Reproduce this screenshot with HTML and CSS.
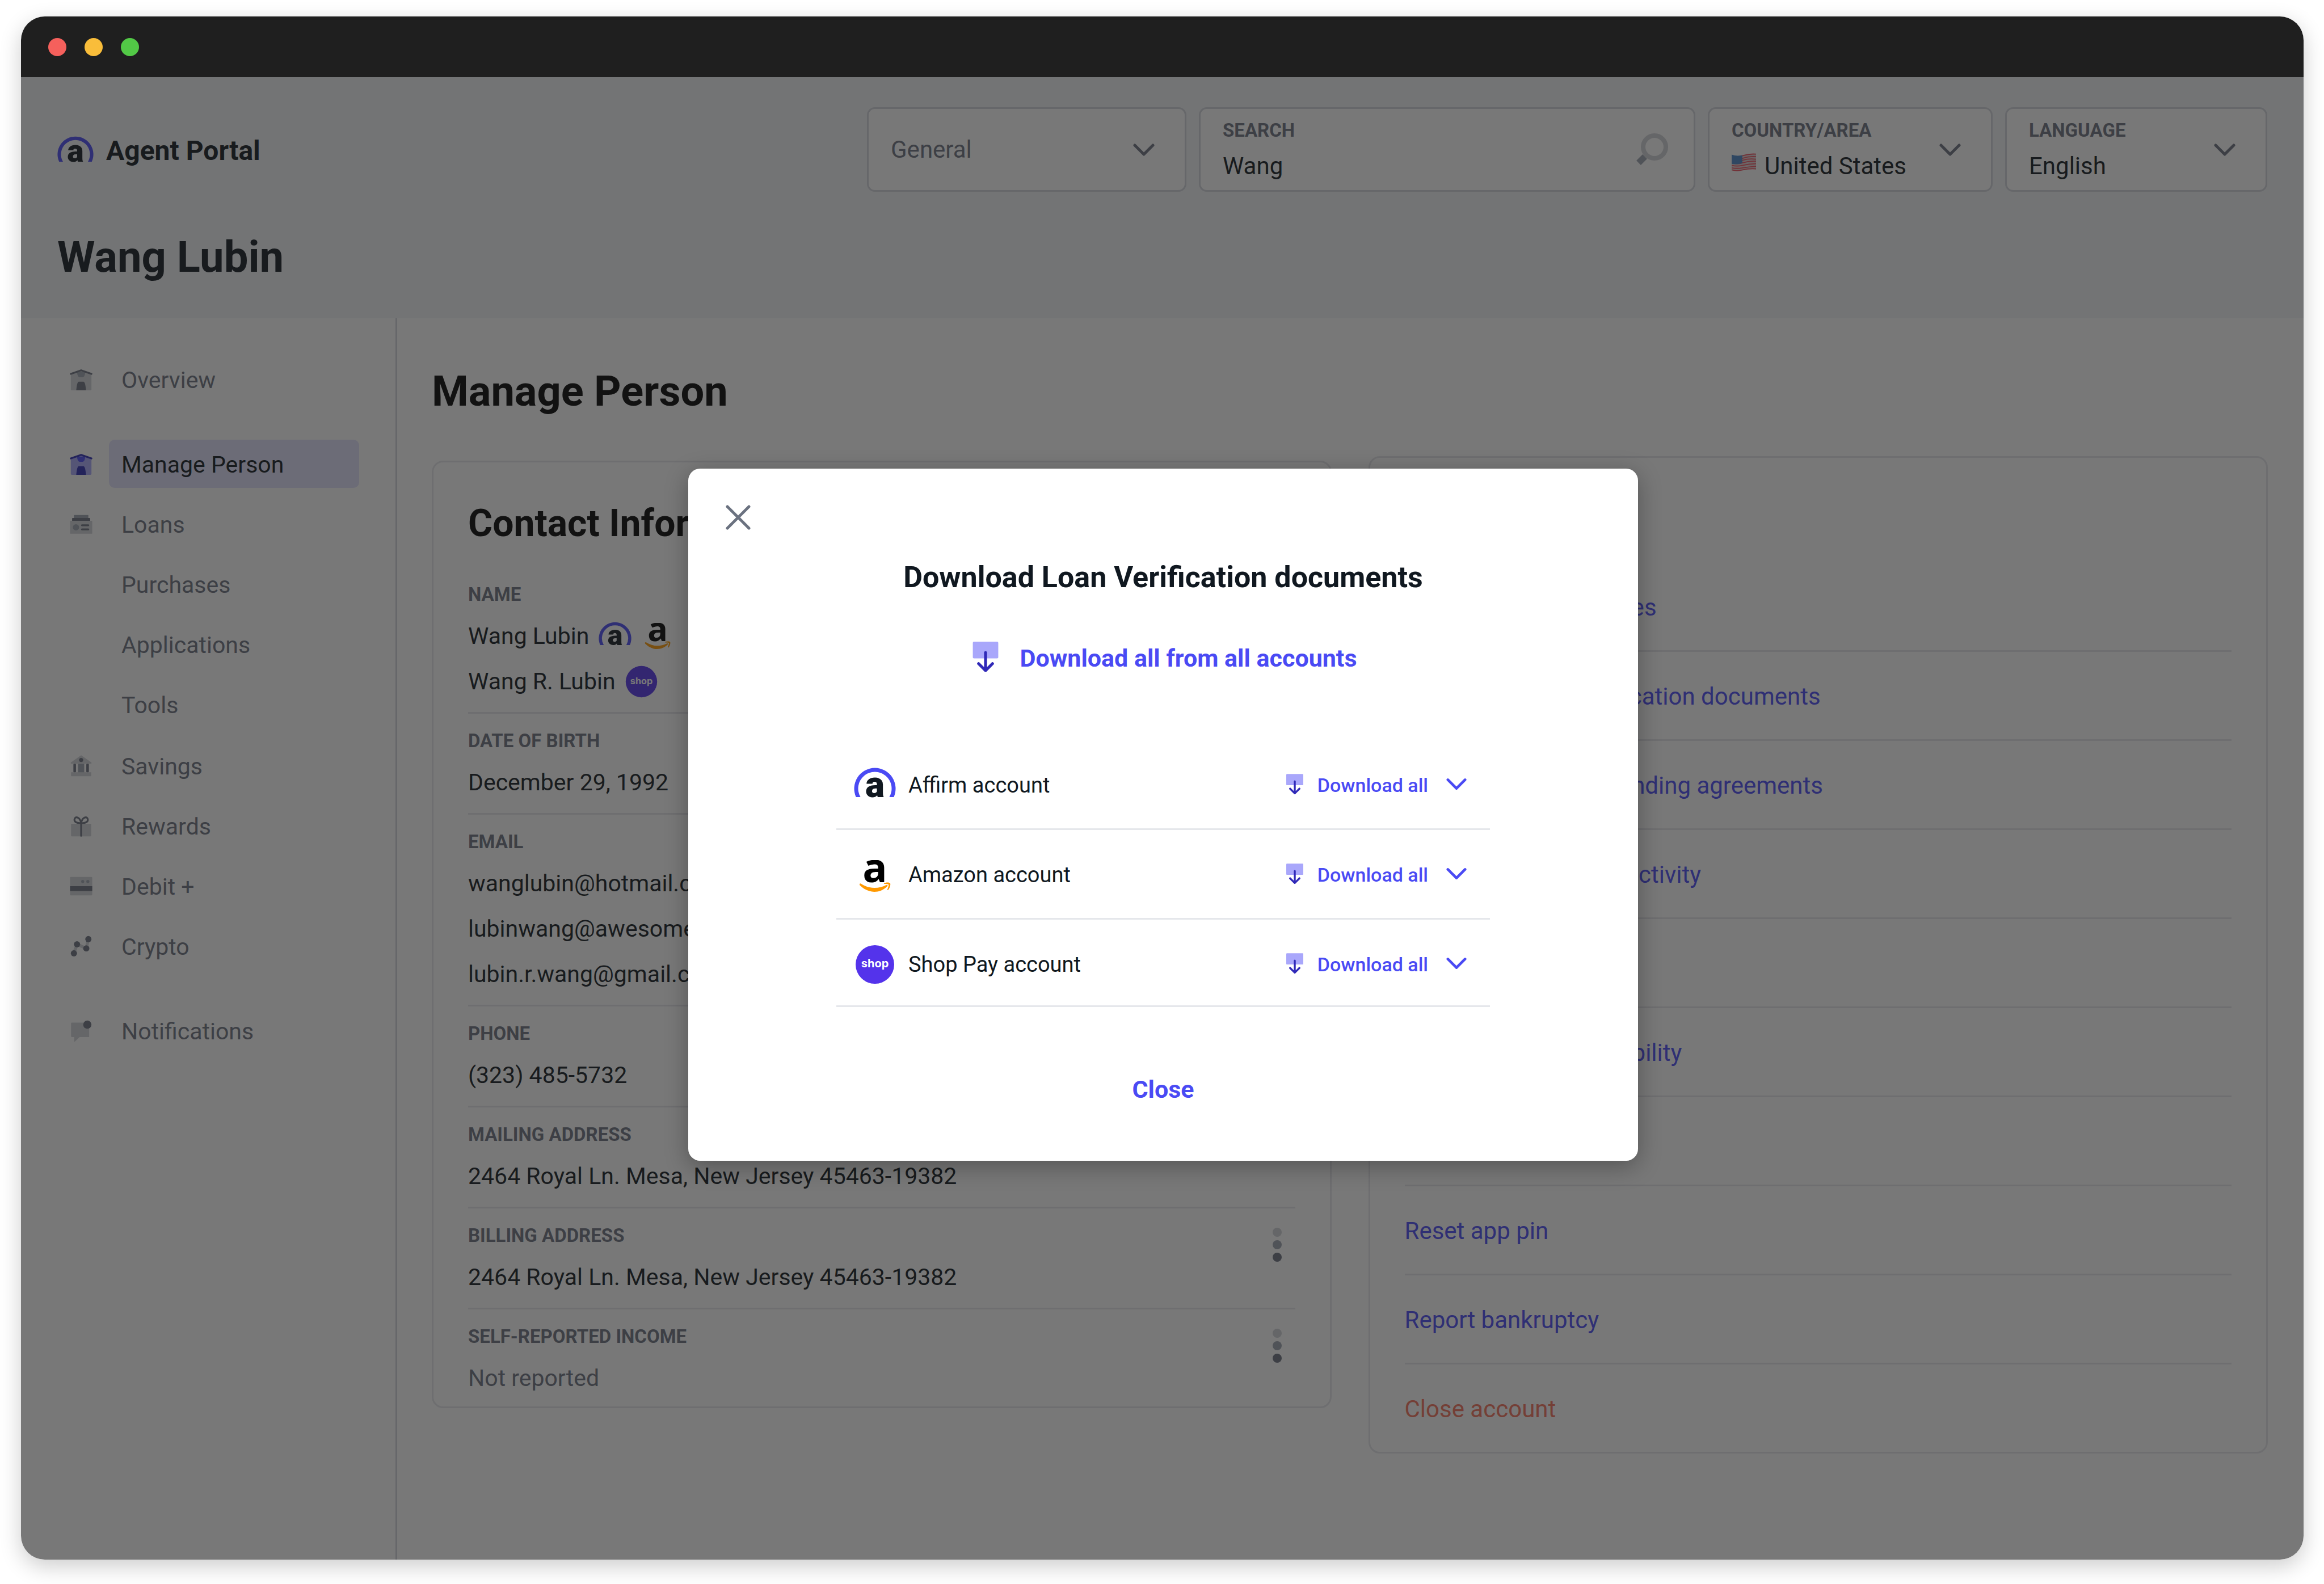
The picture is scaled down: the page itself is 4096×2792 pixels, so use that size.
FILE: index.html
```html
<!DOCTYPE html>
<html lang="en">
<head>
<meta charset="utf-8">
<meta name="viewport" content="width=device-width, initial-scale=1">
<title>Agent Portal – Wang Lubin</title>
<link rel="stylesheet" href="styles.css">
</head>
<body>

<!-- Shared icon and logo symbols -->
<svg class="sprite" aria-hidden="true">
  <symbol id="logo-affirm" viewBox="0 0 74 54">
    <path class="affirm-arc" d="M3.7 52A36.5 36.5 0 1 1 70.3 52H62.4A29.5 29.5 0 1 0 11.6 52Z"/>
    <text class="affirm-a" x="37" y="52" text-anchor="middle">a</text>
  </symbol>
  <symbol id="logo-amazon" viewBox="0 0 56 56">
    <text class="amazon-a" x="28" y="39" text-anchor="middle">a</text>
    <path class="amazon-smile" d="M1 42C2 41 3 41 4 42C18 51 34 51 48 44C50 43 51 45 50 46C43 53 35 56 27 56C17 56 8 51 1 44Z"/>
    <path class="amazon-smile" d="M44 41C47 39 54 39 55 41C56 44 54 50 51 53C50 53 50 53 50 52C51 49 53 44 52 43C51 42 47 42 44 42Z"/>
  </symbol>
  <symbol id="logo-shop" viewBox="0 0 70 70">
    <circle class="shop-disc" cx="35" cy="35" r="34"/>
    <text class="shop-word" x="35" y="40" text-anchor="middle">shop</text>
  </symbol>
  <symbol id="icon-chevron" viewBox="0 0 38 22">
    <path class="line" d="M3 3L19 19L35 3"/>
  </symbol>
  <symbol id="icon-download" viewBox="0 0 44 52">
    <rect class="tone-light" width="44" height="29" rx="2"/>
    <path class="tone-arrow" d="M22 19V49M10 38L22 50L34 38"/>
  </symbol>
  <symbol id="icon-close" viewBox="0 0 44 44">
    <path class="line" d="M3 3L41 41M41 3L3 41"/>
  </symbol>
  <symbol id="icon-search" viewBox="0 0 58 58">
    <circle class="ring" cx="34" cy="24" r="20"/>
    <path class="handle" d="M17 41L6 52"/>
  </symbol>
  <symbol id="icon-more" viewBox="0 0 16 60">
    <circle class="tone-light" cx="8" cy="8" r="8"/>
    <circle class="tone-mid" cx="8" cy="30" r="8"/>
    <circle class="tone-dark" cx="8" cy="52" r="8"/>
  </symbol>
  <symbol id="icon-home" viewBox="0 0 88 88">
    <path class="tone-light" d="M4 22L44 8L84 22V82Q84 86 80 86H8Q4 86 4 82Z"/>
    <path class="tone-mid" d="M28 15H60Q58 35 50 35H38Q30 35 28 15Z"/>
    <path class="tone-dark" d="M25 86Q28 52 35 52H53Q60 52 63 86Z"/>
    <path class="tone-stroke" d="M4 22L44 8L84 22"/>
  </symbol>
  <symbol id="icon-loans" viewBox="0 0 88 88">
    <rect class="tone-mid" x="16" y="8" width="56" height="14" rx="2"/>
    <rect class="tone-dark" x="9" y="20" width="70" height="12" rx="2"/>
    <rect class="tone-light" x="1" y="31" width="86" height="50" rx="2"/>
    <circle class="tone-mid" cx="24" cy="56" r="12"/>
    <path class="tone-stroke" d="M47 48H72M47 64H72"/>
  </symbol>
  <symbol id="icon-savings" viewBox="0 0 88 88">
    <path class="tone-light" d="M44 3L84 31V35H4V31Z"/>
    <path class="tone-light" d="M5 69H83V82Q83 84 81 84H7Q5 84 5 82Z"/>
    <rect class="tone-mid" x="32" y="36" width="24" height="33"/>
    <rect class="tone-dark" x="14" y="36" width="10" height="33" rx="3"/>
    <rect class="tone-dark" x="64" y="36" width="10" height="33" rx="3"/>
    <circle class="tone-dark" cx="44" cy="21" r="8"/>
  </symbol>
  <symbol id="icon-rewards" viewBox="0 0 88 88">
    <rect class="tone-light" x="5" y="35" width="78" height="49" rx="3"/>
    <path class="tone-stroke" d="M44 82V32C28 34 18 28 18 20C18 12 24 8 30 11C38 14 42 22 44 32C46 22 50 14 58 11C64 8 70 12 70 20C70 28 60 34 44 32"/>
  </symbol>
  <symbol id="icon-debit" viewBox="0 0 88 88">
    <rect class="tone-light" x="1" y="8" width="86" height="72" rx="3"/>
    <rect class="tone-dark" x="1" y="44" width="86" height="19"/>
    <circle class="tone-mid" cx="50" cy="26" r="6"/>
    <circle class="tone-mid" cx="70" cy="26" r="6"/>
  </symbol>
  <symbol id="icon-crypto" viewBox="0 0 88 88">
    <path class="tone-link" d="M16 71L28 36L64 52L72 16"/>
    <circle class="tone-dark" cx="16" cy="71" r="12"/>
    <circle class="tone-dark" cx="28" cy="36" r="12"/>
    <circle class="tone-dark" cx="64" cy="52" r="12"/>
    <circle class="tone-dark" cx="72" cy="16" r="12"/>
  </symbol>
  <symbol id="icon-notifications" viewBox="0 0 88 88">
    <path class="tone-light" d="M8 12H72Q75 12 75 15V68H38L20 85Q17 87 17 83V68H8Q5 68 5 65V15Q5 12 8 12Z"/>
    <circle class="tone-dark" cx="68" cy="20" r="16"/>
  </symbol>
  <symbol id="flag-us" viewBox="0 0 48 34">
    <path class="flag-white" d="M0 3Q10 7 22 4T48 1V31Q38 28 26 31T0 33Z"/>
    <path class="flag-red" d="M0 4Q10 8 22 4T48 1M0 9Q10 13 22 9T48 6M0 13Q10 17 22 13T48 11M0 18Q10 22 22 18T48 15M0 23Q10 26 22 23T48 20M0 28Q10 30 22 28T48 25M0 32Q10 35 22 32T48 30"/>
    <path class="flag-blue" d="M0 2Q10 6 21 3V19Q10 22 0 20Z"/>
  </symbol>
</svg>

<div class="window">
  <div class="titlebar">
    <span class="dot dot-red"></span>
    <span class="dot dot-yellow"></span>
    <span class="dot dot-green"></span>
  </div>

  <div class="app">
    <header class="header">
      <div class="topbar">
        <a class="brand" href="#">
          <svg class="brand-logo" aria-hidden="true"><use href="#logo-affirm"/></svg>
          <span class="brand-name">Agent Portal</span>
        </a>
        <div class="fields">
          <div class="field field-scope">
            <select class="control control-muted" aria-label="Search scope"><option>General</option></select>
            <svg class="chevron" aria-hidden="true"><use href="#icon-chevron"/></svg>
          </div>
          <div class="field field-search">
            <div class="field-main">
              <label class="caption" for="search">SEARCH</label>
              <input class="control" id="search" type="text" value="Wang">
            </div>
            <svg class="search-icon" aria-hidden="true"><use href="#icon-search"/></svg>
          </div>
          <div class="field field-country">
            <div class="field-main">
              <label class="caption" for="country">COUNTRY/AREA</label>
              <div class="country-value">
                <svg class="flag" aria-hidden="true"><use href="#flag-us"/></svg>
                <select class="control" id="country"><option>United States</option></select>
              </div>
            </div>
            <svg class="chevron" aria-hidden="true"><use href="#icon-chevron"/></svg>
          </div>
          <div class="field field-language">
            <div class="field-main">
              <label class="caption" for="language">LANGUAGE</label>
              <select class="control" id="language"><option>English</option></select>
            </div>
            <svg class="chevron" aria-hidden="true"><use href="#icon-chevron"/></svg>
          </div>
        </div>
      </div>
      <h1 class="person">Wang Lubin</h1>
    </header>

    <div class="body">
      <nav class="sidebar" aria-label="Sections">
        <ul class="nav">
          <li><a class="nav-link" href="#"><svg class="nav-icon"><use href="#icon-home"/></svg><span class="nav-text">Overview</span></a></li>
        </ul>
        <ul class="nav">
          <li><a class="nav-link nav-current" href="#" aria-current="page"><svg class="nav-icon"><use href="#icon-home"/></svg><span class="nav-text">Manage Person</span></a></li>
          <li>
            <a class="nav-link" href="#"><svg class="nav-icon"><use href="#icon-loans"/></svg><span class="nav-text">Loans</span></a>
            <ul class="nav nav-sub">
              <li><a class="nav-link" href="#"><span class="nav-text">Purchases</span></a></li>
              <li><a class="nav-link" href="#"><span class="nav-text">Applications</span></a></li>
              <li><a class="nav-link" href="#"><span class="nav-text">Tools</span></a></li>
            </ul>
          </li>
          <li><a class="nav-link" href="#"><svg class="nav-icon"><use href="#icon-savings"/></svg><span class="nav-text">Savings</span></a></li>
          <li><a class="nav-link" href="#"><svg class="nav-icon"><use href="#icon-rewards"/></svg><span class="nav-text">Rewards</span></a></li>
          <li><a class="nav-link" href="#"><svg class="nav-icon"><use href="#icon-debit"/></svg><span class="nav-text">Debit +</span></a></li>
          <li><a class="nav-link" href="#"><svg class="nav-icon"><use href="#icon-crypto"/></svg><span class="nav-text">Crypto</span></a></li>
        </ul>
        <ul class="nav">
          <li><a class="nav-link" href="#"><svg class="nav-icon"><use href="#icon-notifications"/></svg><span class="nav-text">Notifications</span></a></li>
        </ul>
      </nav>

      <main class="main">
        <h2 class="page-title">Manage Person</h2>
        <div class="cards">
          <section class="card card-contact">
            <h3 class="card-title">Contact Information</h3>
            <dl class="facts">
              <div class="fact">
                <div>
                  <dt class="caption">NAME</dt>
                  <dd class="value">Wang Lubin <svg class="tag tag-affirm"><use href="#logo-affirm"/></svg><svg class="tag tag-amazon"><use href="#logo-amazon"/></svg></dd>
                  <dd class="value">Wang R. Lubin <svg class="tag tag-shop"><use href="#logo-shop"/></svg></dd>
                </div>
              </div>
              <div class="fact">
                <div>
                  <dt class="caption">DATE OF BIRTH</dt>
                  <dd class="value">December 29, 1992</dd>
                </div>
              </div>
              <div class="fact">
                <div>
                  <dt class="caption">EMAIL</dt>
                  <dd class="value">wanglubin@hotmail.com</dd>
                  <dd class="value">lubinwang@awesome.com</dd>
                  <dd class="value">lubin.r.wang@gmail.com</dd>
                </div>
              </div>
              <div class="fact">
                <div>
                  <dt class="caption">PHONE</dt>
                  <dd class="value">(323) 485-5732</dd>
                </div>
              </div>
              <div class="fact">
                <div>
                  <dt class="caption">MAILING ADDRESS</dt>
                  <dd class="value">2464 Royal Ln. Mesa, New Jersey 45463-19382</dd>
                </div>
              </div>
              <div class="fact">
                <div>
                  <dt class="caption">BILLING ADDRESS</dt>
                  <dd class="value">2464 Royal Ln. Mesa, New Jersey 45463-19382</dd>
                </div>
                <button class="more" type="button" aria-label="Billing address options"><svg class="more-icon"><use href="#icon-more"/></svg></button>
              </div>
              <div class="fact">
                <div>
                  <dt class="caption">SELF-REPORTED INCOME</dt>
                  <dd class="value value-muted">Not reported</dd>
                </div>
                <button class="more" type="button" aria-label="Income options"><svg class="more-icon"><use href="#icon-more"/></svg></button>
              </div>
            </dl>
          </section>

          <section class="card card-actions">
            <h3 class="card-title">Actions</h3>
            <ul class="actions">
              <li class="action"><a href="#">Edit payment schedules</a></li>
              <li class="action"><a href="#">Download Loan Verification documents</a></li>
              <li class="action"><a href="#">Download loan and lending agreements</a></li>
              <li class="action"><a href="#">Report unauthorized activity</a></li>
              <li class="action"><a href="#">Send message</a></li>
              <li class="action"><a href="#">Request account eligibility</a></li>
              <li class="action"><a href="#">Lock account</a></li>
              <li class="action"><a href="#">Reset app pin</a></li>
              <li class="action"><a href="#">Report bankruptcy</a></li>
              <li class="action action-danger"><a href="#">Close account</a></li>
            </ul>
          </section>
        </div>
      </main>
    </div>

    <div class="overlay">
      <div class="modal" role="dialog" aria-modal="true" aria-labelledby="modal-title">
        <button class="modal-x" type="button" aria-label="Close dialog"><svg class="x-icon"><use href="#icon-close"/></svg></button>
        <h2 class="modal-title" id="modal-title">Download Loan Verification documents</h2>
        <a class="download-everything" href="#">
          <svg class="download-icon"><use href="#icon-download"/></svg>
          Download all from all accounts
        </a>
        <ul class="accounts">
          <li class="account">
            <svg class="account-logo"><use href="#logo-affirm" x="0" y="4" width="74" height="54"/></svg>
            <span class="account-name">Affirm account</span>
            <button class="download" type="button"><svg class="download-icon-small"><use href="#icon-download"/></svg>Download all<svg class="chevron-small"><use href="#icon-chevron"/></svg></button>
          </li>
          <li class="account">
            <svg class="account-logo"><use href="#logo-amazon" x="9" y="9" width="56" height="56"/></svg>
            <span class="account-name">Amazon account</span>
            <button class="download" type="button"><svg class="download-icon-small"><use href="#icon-download"/></svg>Download all<svg class="chevron-small"><use href="#icon-chevron"/></svg></button>
          </li>
          <li class="account">
            <svg class="account-logo"><use href="#logo-shop" x="2" y="0" width="70" height="70"/></svg>
            <span class="account-name">Shop Pay account</span>
            <button class="download" type="button"><svg class="download-icon-small"><use href="#icon-download"/></svg>Download all<svg class="chevron-small"><use href="#icon-chevron"/></svg></button>
          </li>
        </ul>
        <button class="modal-close" type="button">Close</button>
      </div>
    </div>
  </div>
</div>

</body>
</html>
```
FILE: styles.css
```css
:root {
  --ink: #101820;
  --muted: #6b7280;
  --rule: #e5e7eb;
  --primary: #4a4af4;
  --tone-light: #cfd1d6;
  --tone-mid: #9ca3af;
  --tone-dark: #6b7280;
}

* {
  box-sizing: border-box;
}

body {
  margin: 0;
  padding: 29px 36px 43px 37px;
  background: #fff;
  color: var(--ink);
  font: 400 42px/50px Roboto, "Liberation Sans", sans-serif;
}

h1, h2, h3, ul, dl, dd {
  margin: 0;
  padding: 0;
}

ul {
  list-style: none;
}

a {
  color: inherit;
  text-decoration: none;
}

button {
  padding: 0;
  border: 0;
  background: none;
  font: inherit;
  cursor: pointer;
}

svg {
  display: block;
  flex: none;
}

.sprite {
  display: none;
}

/* Icon tones */
.tone-light { fill: var(--tone-light); }
.tone-mid { fill: var(--tone-mid); }
.tone-dark { fill: var(--tone-dark); }
.tone-stroke { fill: none; stroke: var(--tone-dark); stroke-width: 7; stroke-linecap: round; stroke-linejoin: round; }
.tone-link { fill: none; stroke: var(--tone-light); stroke-width: 12; }
.tone-arrow { fill: none; stroke: #3029b8; stroke-width: 5; stroke-linecap: round; stroke-linejoin: round; }
.line { fill: none; stroke: currentColor; stroke-width: 5; stroke-linecap: round; stroke-linejoin: round; }
.ring { fill: none; stroke: var(--tone-light); stroke-width: 8; }
.handle { stroke: var(--tone-mid); stroke-width: 11; }
.affirm-arc { fill: var(--primary); }
.affirm-a { fill: var(--ink); font: 900 64px Roboto, sans-serif; }
.amazon-a { fill: #000; font: 700 72px "Open Sans", sans-serif; }
.amazon-smile { fill: #ff9900; }
.shop-disc { fill: #5433eb; }
.shop-word { fill: #fff; font: 700 20px Inter, sans-serif; }
.flag-white { fill: #e0d2d4; }
.flag-red { fill: none; stroke: #f0505f; stroke-width: 2; }
.flag-blue { fill: #4a86c8; }

/* Window */
.window {
  display: flex;
  flex-direction: column;
  min-height: calc(100vh - 72px);
  border-radius: 42px;
  overflow: hidden;
  box-shadow: 0 12px 38px rgba(0, 0, 0, 0.2);
}

.titlebar {
  display: flex;
  align-items: center;
  gap: 32px;
  height: 107px;
  padding: 0 48px;
  background: #1f1f1f;
}

.dot { width: 32px; height: 32px; border-radius: 50%; }
.dot-red { background: #f5605c; }
.dot-yellow { background: #f9bd3a; }
.dot-green { background: #52c946; }

.app {
  position: relative;
  display: flex;
  flex-direction: column;
  flex: 1;
  background: #fff;
}

/* Header */
.header {
  padding: 53px 64px 64px;
  background: #f3f4f8;
}

.topbar {
  display: flex;
  align-items: center;
  justify-content: space-between;
}

.brand {
  display: flex;
  align-items: center;
  gap: 22px;
  font-size: 48px;
  font-weight: 700;
}

.brand-logo { width: 64px; height: 47px; }
.brand-name { padding-top: 5px; }

.fields {
  display: flex;
  gap: 22px;
}

.field {
  display: flex;
  align-items: center;
  justify-content: space-between;
  height: 149px;
  padding: 0 53px 0 39px;
  border: 3px solid #d1d5db;
  border-radius: 14px;
  background: #fff;
}

.field-scope { width: 563px; }
.field-search { width: 875px; padding-right: 45px; }
.field-country { width: 502px; }
.field-language { width: 462px; }

.field-main {
  display: grid;
  flex: 1;
  gap: 18px;
  min-width: 0;
}

.caption {
  color: var(--muted);
  font-size: 33px;
  font-weight: 700;
  line-height: 40px;
}

.control {
  width: 100%;
  min-width: 0;
  height: 50px;
  padding: 0;
  border: 0;
  outline: 0;
  appearance: none;
  background: none;
  color: var(--ink);
  font: inherit;
}

.control-muted { color: var(--muted); }

.country-value {
  display: flex;
  gap: 15px;
}

.flag { width: 43px; height: 36px; }
.chevron { width: 38px; height: 22px; color: var(--muted); }
.search-icon { width: 58px; height: 58px; }

.person {
  margin-top: 71px;
  font-size: 76px;
  line-height: 88px;
}

/* Sidebar */
.body {
  display: flex;
  flex: 1;
}

.sidebar {
  display: flex;
  flex-direction: column;
  gap: 64px;
  width: 663px;
  padding: 65px 64px 65px 86px;
  border-right: 3px solid #d1d5db;
}

.nav {
  display: grid;
  gap: 21px;
}

.nav-sub { padding: 21px 0 2px; }

.nav-link {
  display: grid;
  grid-template-columns: 42px 1fr;
  gap: 27px;
  align-items: center;
  color: var(--muted);
  font-size: 41px;
}

.nav-icon { width: 40px; height: 40px; }

.nav-text {
  grid-column: 2;
  padding: 4px 22px 0;
  border-radius: 10px;
  line-height: 81px;
}

.nav-current {
  --tone-light: #a9a7fb;
  --tone-mid: #4a4af4;
  --tone-dark: #2b2bb5;
}

.nav-current .nav-text {
  background: #e2e1fc;
  color: var(--ink);
}

/* Main */
.main {
  flex: 1;
  padding: 85px 63px 64px 61px;
}

.page-title {
  color: #000;
  font-size: 74px;
  line-height: 88px;
}

.cards {
  display: grid;
  grid-template-columns: 1fr 1fr;
  align-items: start;
  gap: 65px;
  margin-top: 70px;
}

.card {
  padding: 68px 61px 0;
  border: 3px solid var(--rule);
  border-radius: 20px;
}

.card-contact { margin-top: 8px; }

.card-title {
  margin-bottom: 37px;
  color: #000;
  font-size: 66px;
  line-height: 80px;
}

.fact {
  display: flex;
  align-items: flex-start;
  justify-content: space-between;
  padding: 28px 24px 14px 0;
  border-bottom: 3px solid var(--rule);
}

.fact:last-child {
  padding-bottom: 10px;
  border-bottom: 0;
}

.fact .caption { margin-bottom: 13px; }

.value {
  display: flex;
  align-items: center;
  gap: 17px;
  height: 80px;
  font-size: 41px;
}

.value-muted { color: var(--muted); }
.tag-affirm { width: 58px; height: 43px; margin-bottom: 8px; }
.tag-amazon { width: 58px; height: 46px; }
.tag-shop { width: 57px; height: 57px; }

.more { padding: 6px 0; }
.more-icon { width: 16px; height: 60px; }

.action {
  padding-top: 4px;
  border-bottom: 3px solid var(--rule);
  color: var(--primary);
  line-height: 150px;
}

.action:last-child { border-bottom: 0; }
.action-danger { color: #f5705a; }

/* Modal */
.overlay {
  position: absolute;
  inset: 0;
  display: grid;
  place-items: center;
  padding: 0 0 14px 3px;
  background: rgba(30, 30, 30, 0.6);
}

.modal {
  display: flex;
  flex-direction: column;
  align-items: center;
  width: 1674px;
  padding: 64px 66px 96px;
  border-radius: 21px;
  background: #fff;
  box-shadow: 0 10px 42px rgba(0, 0, 0, 0.3);
}

.modal-x { align-self: flex-start; color: var(--muted); }
.x-icon { width: 44px; height: 44px; }

.modal-title {
  margin-top: 52px;
  font-size: 52px;
  line-height: 64px;
}

.download-everything {
  display: flex;
  align-items: center;
  gap: 33px;
  margin-top: 80px;
  color: var(--primary);
  font-size: 43px;
  font-weight: 700;
  line-height: 60px;
}

.download-icon {
  --tone-light: #a9a7fb;
  width: 56px;
  height: 53px;
  margin-bottom: 5px;
}

.accounts {
  width: 1152px;
  margin-top: 115px;
}

.account {
  display: flex;
  align-items: center;
  gap: 22px;
  padding: 44px 41px 41px 31px;
  border-bottom: 3px solid var(--rule);
}

.account:last-child { padding-bottom: 37px; }
.account-logo { width: 74px; height: 70px; }

.account-name {
  flex: 1;
  font-size: 38px;
}

.download {
  display: flex;
  align-items: center;
  color: var(--primary);
  font-size: 34px;
  font-weight: 500;
}

.download-icon-small {
  --tone-light: #a9a7fb;
  width: 30px;
  height: 36px;
  margin: 0 25px 4px 0;
}

.chevron-small {
  width: 36px;
  height: 22px;
  margin: 0 0 4px 32px;
}

.modal-close {
  margin-top: 115px;
  color: var(--primary);
  font-size: 43px;
  font-weight: 700;
  line-height: 60px;
}
```
